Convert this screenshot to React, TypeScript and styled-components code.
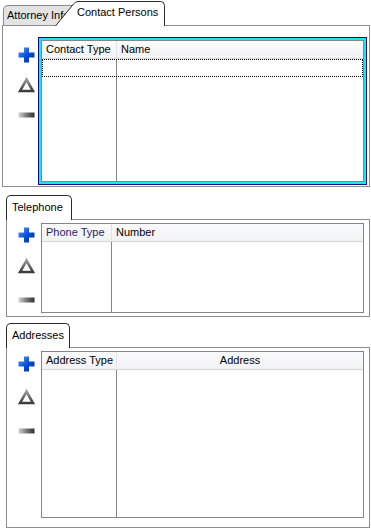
import React, { useId } from 'react'
import styled, { createGlobalStyle } from 'styled-components'

const GlobalStyle = createGlobalStyle`
	html, body {
		margin: 0;
		padding: 0;
		background: #ffffff;
	}
	body {
		font-family: "Liberation Sans", Arial, sans-serif;
		font-size: 11px;
		color: #000000;
	}
`

const Page = styled.div`
	width: 371px;
	height: 529px;
	display: flex;
	flex-direction: column;
	overflow: hidden;
`

const Section = styled.div<{ $left: number; $top: number; $width: number }>`
	display: flex;
	flex-direction: column;
	margin-left: ${p => p.$left}px;
	margin-top: ${p => p.$top}px;
	width: ${p => p.$width}px;
`

const TabStrip = styled.div<{ $height: number }>`
	display: flex;
	align-items: flex-end;
	height: ${p => p.$height}px;
`

const InactiveTab = styled.div`
	box-sizing: border-box;
	margin-left: 1px;
	width: 80px;
	height: 20px;
	padding-left: 3px;
	line-height: 18px;
	background: #e3e3e3;
	border: 1px solid #8b8b8b;
	border-bottom: none;
	border-radius: 5px 0 0 0;
	white-space: nowrap;
	overflow: hidden;
	flex-shrink: 0;
`

const SlantTab = styled.div`
	position: relative;
	z-index: 1;
	box-sizing: border-box;
	margin-left: -28px;
	margin-bottom: -1px;
	width: 110px;
	height: 25px;
	padding-left: 22px;
	line-height: 22px;
	white-space: nowrap;
	flex-shrink: 0;
`

const TabShape = styled.svg`
	position: absolute;
	left: 0;
	top: 0;
	z-index: -1;
`

const PlainTab = styled.div<{ $width: number }>`
	position: relative;
	z-index: 1;
	box-sizing: border-box;
	width: ${p => p.$width}px;
	height: 25px;
	margin-bottom: -1px;
	padding-left: 5px;
	line-height: 22px;
	background: #ffffff;
	border: 1px solid #2a2a2a;
	border-bottom: none;
	border-radius: 5px 5px 0 0;
	white-space: nowrap;
`

const Panel = styled.div<{ $height: number; $pad: string }>`
	box-sizing: border-box;
	display: flex;
	height: ${p => p.$height}px;
	padding: ${p => p.$pad};
	border: 1px solid #8c8d95;
`

const IconColumn = styled.div<{ $top: number; $left: number; $width: number; $gaps: number[] }>`
	box-sizing: border-box;
	display: flex;
	flex-direction: column;
	align-items: flex-start;
	width: ${p => p.$width}px;
	padding-top: ${p => p.$top}px;
	padding-left: ${p => p.$left}px;
	flex-shrink: 0;

	& > svg:nth-child(2) {
		margin-top: ${p => p.$gaps[0]}px;
	}
	& > svg:nth-child(3) {
		margin-top: ${p => p.$gaps[1]}px;
	}
`

const FocusRing = styled.div`
	display: flex;
	flex: 1;
	border: 1px solid #0c0c88;
	padding: 2px;
	background: #14e8f0;
`

const GridBox = styled.div<{ $height?: number }>`
	box-sizing: border-box;
	display: flex;
	flex-direction: column;
	width: 323px;
	height: ${p => (p.$height ? p.$height + 'px' : 'auto')};
	flex: ${p => (p.$height ? '0 0 auto' : '1')};
	border: 1px solid #868686;
	background: #ffffff;
`

const HeaderRow = styled.div`
	display: flex;
	height: 17px;
	border-bottom: 1px solid #d5d5d5;
	background: linear-gradient(#fbfbfc, #f1f2f4);
	line-height: 17px;
	flex-shrink: 0;
`

const HeaderCell = styled.div<{ $width?: number; $center?: boolean; $color?: string }>`
	box-sizing: border-box;
	width: ${p => (p.$width ? p.$width + 'px' : 'auto')};
	flex: ${p => (p.$width ? '0 0 auto' : '1')};
	padding-left: ${p => (p.$center ? '0' : '4px')};
	text-align: ${p => (p.$center ? 'center' : 'left')};
	color: ${p => p.$color || '#000000'};
	border-right: ${p => (p.$width ? '1px solid #e2e3e6' : 'none')};
	white-space: nowrap;
	overflow: hidden;
`

const FocusRow = styled.div`
	display: flex;
	height: 16px;
	border: 1px dotted #000000;
	flex-shrink: 0;
`

const BodyRow = styled.div`
	display: flex;
	flex: 1;
`

const BodyCell = styled.div<{ $width?: number }>`
	box-sizing: border-box;
	width: ${p => (p.$width ? p.$width + 'px' : 'auto')};
	flex: ${p => (p.$width ? '0 0 auto' : '1')};
	border-right: ${p => (p.$width ? '1px solid #858585' : 'none')};
`

const PlusIcon: React.FC = () => {
	const id = useId()
	return (
		<svg width="17" height="16" viewBox="0 0 17 16">
			<defs>
				<linearGradient id={id} x1="0" y1="0" x2="1" y2="1">
					<stop offset="0" stopColor="#5a9cff" />
					<stop offset="0.5" stopColor="#0a50d8" />
					<stop offset="1" stopColor="#002a8c" />
				</linearGradient>
			</defs>
			<path d="M6 0.5 H11 V5.5 H16.5 V10.5 H11 V15.5 H6 V10.5 H0.5 V5.5 H6 Z" fill={`url(#${id})`} />
		</svg>
	)
}

const TriangleIcon: React.FC = () => {
	const id = useId()
	return (
		<svg width="17" height="16" viewBox="0 0 17 16">
			<defs>
				<linearGradient id={id} x1="0" y1="0" x2="0" y2="1">
					<stop offset="0" stopColor="#9a9a9a" />
					<stop offset="1" stopColor="#3c3c3c" />
				</linearGradient>
			</defs>
			<path d="M8.5 2.5 L15 14 H2 Z" fill="none" stroke={`url(#${id})`} strokeWidth="2.6" strokeLinejoin="miter" />
		</svg>
	)
}

const MinusIcon: React.FC = () => {
	const id = useId()
	return (
		<svg width="17" height="16" viewBox="0 0 17 16">
			<defs>
				<linearGradient id={id} x1="0" y1="0" x2="1" y2="0">
					<stop offset="0" stopColor="#d2d2d2" />
					<stop offset="0.5" stopColor="#7a7a7a" />
					<stop offset="1" stopColor="#2e2e2e" />
				</linearGradient>
			</defs>
			<rect x="0.5" y="5.5" width="16" height="5" fill={`url(#${id})`} />
		</svg>
	)
}

interface IIconsProps {
	top: number
	left: number
	width: number
	gaps: number[]
}

const Icons: React.FC<IIconsProps> = props => {
	const { top, left, width, gaps } = props
	return (
		<IconColumn $top={top} $left={left} $width={width} $gaps={gaps}>
			<PlusIcon />
			<TriangleIcon />
			<MinusIcon />
		</IconColumn>
	)
}

const App: React.FC = () => {
	return (
		<Page>
			<GlobalStyle />

			<Section $left={2} $top={0} $width={368}>
				<TabStrip $height={25}>
					<InactiveTab>Attorney Info</InactiveTab>
					<SlantTab>
						<TabShape width="110" height="25" viewBox="0 0 110 25">
							<path
								d="M0.5 25 L18.5 3 Q20.5 0.5 23 0.5 L105.5 0.5 Q109.5 0.5 109.5 4.5 L109.5 25"
								fill="#ffffff"
								stroke="#2a2a2a"
								strokeWidth="1"
							/>
						</TabShape>
						Contact Persons
					</SlantTab>
				</TabStrip>
				<Panel $height={162} $pad="11px 2px 1px 0">
					<Icons top={10} left={15} width={35} gaps={[14, 14]} />
					<FocusRing>
						<GridBox>
							<HeaderRow>
								<HeaderCell $width={75}>Contact Type</HeaderCell>
								<HeaderCell>Name</HeaderCell>
							</HeaderRow>
							<FocusRow>
								<BodyCell $width={74} />
								<BodyCell />
							</FocusRow>
							<BodyRow>
								<BodyCell $width={75} />
								<BodyCell />
							</BodyRow>
						</GridBox>
					</FocusRing>
				</Panel>
			</Section>

			<Section $left={6} $top={8} $width={364}>
				<TabStrip $height={24}>
					<PlainTab $width={66}>Telephone</PlainTab>
				</TabStrip>
				<Panel $height={98} $pad="3px 5px 3px 0">
					<Icons top={4} left={11} width={34} gaps={[15, 18]} />
					<GridBox $height={90}>
						<HeaderRow>
							<HeaderCell $width={70} $color="#1c2270">Phone Type</HeaderCell>
							<HeaderCell>Number</HeaderCell>
						</HeaderRow>
						<BodyRow>
							<BodyCell $width={70} />
							<BodyCell />
						</BodyRow>
					</GridBox>
				</Panel>
			</Section>

			<Section $left={6} $top={6} $width={364}>
				<TabStrip $height={24}>
					<PlainTab $width={64}>Addresses</PlainTab>
				</TabStrip>
				<Panel $height={181} $pad="3px 5px 9px 0">
					<Icons top={5} left={11} width={34} gaps={[17, 18]} />
					<GridBox $height={167}>
						<HeaderRow>
							<HeaderCell $width={75}>Address Type</HeaderCell>
							<HeaderCell $center>Address</HeaderCell>
						</HeaderRow>
						<BodyRow>
							<BodyCell $width={75} />
							<BodyCell />
						</BodyRow>
					</GridBox>
				</Panel>
			</Section>
		</Page>
	)
}

export default App
